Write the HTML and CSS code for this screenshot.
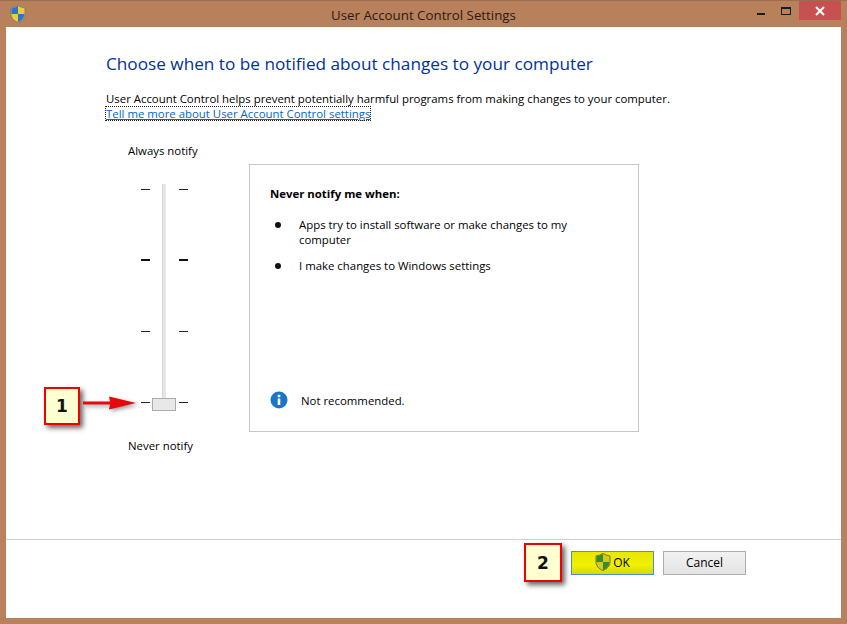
FILE: index.html
```html
<!DOCTYPE html>
<html lang="en">
<head>
  <meta charset="UTF-8">
  <title>User Account Control Settings</title>
  <link rel="stylesheet" href="styles.css">
</head>
<body>
  <div class="window">
    <div class="titlebar">
      <svg class="app-icon" width="16" height="18" viewBox="0 0 16 18">
        <path d="M8 0.5 C10 1.8 12.5 2.6 15 3 V9 C15 13 12 16 8 17.5 C4 16 1 13 1 9 V3 C3.5 2.6 6 1.8 8 0.5 Z" fill="#eccb3c" stroke="#6b7a80" stroke-width="0.8"/>
        <path d="M8 1 C6 2.2 3.8 3 1.5 3.4 V9 H8 Z" fill="#2f74c4"/>
        <path d="M8 9 H14.5 C14.3 12.8 11.6 15.6 8 17 Z" fill="#2f74c4"/>
      </svg>
      <div class="title">User Account Control Settings</div>
      <div class="controls">
        <div class="min-btn"></div>
        <div class="max-btn"></div>
        <div class="close-btn">
          <svg width="10" height="10" viewBox="0 0 10 10"><path d="M1 1 L9 9 M9 1 L1 9" stroke="#fff" stroke-width="2"/></svg>
        </div>
      </div>
    </div>

    <div class="client">
      <div class="content">
        <h1>Choose when to be notified about changes to your computer</h1>
        <p class="intro">User Account Control helps prevent potentially harmful programs from making changes to your computer.</p>
        <a class="more-link">Tell me more about User Account Control settings</a>

        <div class="settings">
          <div class="slider-col">
            <div class="slider-label">Always notify</div>
            <div class="slider">
              <div class="track"></div>
              <div class="tick-row"><span class="tick"></span><span class="tick"></span></div>
              <div class="tick-row bold"><span class="tick"></span><span class="tick"></span></div>
              <div class="tick-row"><span class="tick"></span><span class="tick"></span></div>
              <div class="tick-row"><span class="tick"></span><span class="tick"></span></div>
              <div class="thumb"></div>
            </div>
            <div class="slider-label">Never notify</div>
          </div>

          <div class="info-box">
            <div class="info-head">Never notify me when:</div>
            <ul class="info-list">
              <li>Apps try to install software or make changes to my computer</li>
              <li>I make changes to Windows settings</li>
            </ul>
            <div class="info-note">
              <svg width="18" height="18" viewBox="0 0 18 18">
                <circle cx="9" cy="9" r="8.5" fill="#1b74c5"/>
                <rect x="7.7" y="7.5" width="2.6" height="6.5" fill="#fff"/>
                <rect x="7.7" y="3.8" width="2.6" height="2.4" fill="#fff"/>
              </svg>
              <span>Not recommended.</span>
            </div>
          </div>
        </div>
      </div>

      <div class="footer">
        <button class="btn btn-ok">
          <svg width="16" height="18" viewBox="0 0 16 18">
            <path d="M8 0.5 C10 1.8 12.5 2.6 15 3 V9 C15 13 12 16 8 17.5 C4 16 1 13 1 9 V3 C3.5 2.6 6 1.8 8 0.5 Z" fill="#d8c81c" stroke="#6f6c1c" stroke-width="0.9"/>
            <path d="M8 1 C6 2.2 3.8 3 1.5 3.4 V9 H8 Z" fill="#2f8f34"/>
            <path d="M8 9 H14.5 C14.3 12.8 11.6 15.6 8 17 Z" fill="#2f8f34"/>
          </svg>
          OK
        </button>
        <button class="btn">Cancel</button>
      </div>
    </div>
  </div>

  <!-- callouts drawn on top of the screenshot -->
  <div class="callout callout-1">1</div>
  <svg class="arrow" width="56" height="14" viewBox="0 0 56 14">
    <path d="M1 5.6 H28 L27 0.5 L54 7 L27 13.5 L28 8.4 H1 Z" fill="#e8080c"/>
  </svg>
  <div class="callout callout-2">2</div>
</body>
</html>
```

FILE: styles.css
```css
* {
  box-sizing: border-box;
}

body {
  margin: 0;
  width: 847px;
  height: 624px;
  position: relative;
  overflow: hidden;
  font-family: "Open Sans", "Noto Sans", sans-serif;
  font-size: 11.4px;
  color: #000;
}

.window {
  width: 847px;
  height: 624px;
  background-color: #b9805c;
  padding: 0 6px 6px 6px;
  display: flex;
  flex-direction: column;
  border-top: 1px solid #9c6e50;
}

.titlebar {
  height: 26px;
  flex: none;
  display: flex;
  align-items: flex-start;
  position: relative;
}

.app-icon {
  margin: 4px 0 0 4px;
}

.title {
  position: absolute;
  left: 0;
  right: 0;
  top: 5px;
  text-align: center;
  font-size: 13.3px;
  color: #2a1c12;
}

.controls {
  margin-left: auto;
  display: flex;
  align-items: flex-start;
}

.min-btn {
  width: 8px;
  height: 2px;
  background-color: #1c1c1c;
  margin: 12px 16px 0 0;
}

.max-btn {
  width: 10px;
  height: 8px;
  border: 1px solid #1c1c1c;
  border-top-width: 2px;
  margin: 6px 8px 0 0;
}

.close-btn {
  width: 42px;
  height: 19px;
  background-color: #c75050;
  display: flex;
  align-items: center;
  justify-content: center;
}

.client {
  flex: 1;
  background-color: #fff;
  display: flex;
  flex-direction: column;
}

.content {
  flex: 1;
  padding: 25px 0 0 100px;
}

h1 {
  margin: 0;
  font-size: 17.2px;
  font-weight: 400;
  line-height: 24px;
  color: #003399;
}

.intro {
  margin: 15px 0 0 0;
  line-height: 15px;
  white-space: nowrap;
}

.more-link {
  display: inline-block;
  line-height: 13px;
  color: #0066cc;
  text-decoration: underline;
  outline: 1px dotted #222;
}

.settings {
  display: flex;
  margin-left: -39px;
  margin-top: 22px;
}

.slider-col {
  width: 182px;
  flex: none;
}

.slider-label {
  padding-left: 61px;
  line-height: 16px;
}

.slider {
  position: relative;
  width: 70px;
  height: 279px;
  margin: 0 0 0 77px;
  padding-top: 16px;
  display: flex;
  flex-direction: column;
}

.track {
  position: absolute;
  left: 18px;
  top: 25px;
  width: 4px;
  height: 226px;
  background-color: #e6e6e6;
  border-left: 1px solid #d6d6d6;
}

.tick-row {
  height: 71px;
  flex: none;
  display: flex;
  justify-content: space-between;
  padding: 14px 0 0 0;
  width: 47px;
  position: relative;
  left: -3px;
}

.tick {
  width: 9px;
  height: 1px;
  background-color: #222;
}

.tick-row.bold {
  padding-top: 13px;
}

.bold .tick {
  height: 2px;
  background-color: #111;
}

.thumb {
  position: absolute;
  left: 8px;
  top: 239px;
  width: 24px;
  height: 13px;
  background-color: #e8e8e8;
  border: 1px solid #ababab;
}

.info-box {
  width: 390px;
  height: 268px;
  margin-top: 21px;
  border: 1px solid #c8c8c8;
  padding: 21px 20px 0 20px;
  display: flex;
  flex-direction: column;
}

.info-head {
  font-weight: 700;
  line-height: 16px;
}

.info-list {
  margin: 15px 0 0 0;
  padding: 0;
  list-style: none;
}

.info-list li {
  position: relative;
  padding-left: 29px;
  line-height: 15px;
  margin-bottom: 11px;
  width: 310px;
}

.info-list li::before {
  content: "";
  position: absolute;
  left: 5px;
  top: 5px;
  width: 6px;
  height: 6px;
  border-radius: 50%;
  background-color: #111;
}

.info-note {
  margin-top: auto;
  margin-bottom: 22px;
  display: flex;
  align-items: center;
  gap: 13px;
}

.footer {
  height: 79px;
  flex: none;
  border-top: 1px solid #cfcfcf;
  display: flex;
  align-items: flex-start;
  gap: 9px;
  padding: 11px 0 0 565px;
}

.btn {
  width: 83px;
  height: 24px;
  font-family: inherit;
  font-size: 12px;
  color: #000;
  background: linear-gradient(#f2f2f2, #e4e4e4);
  border: 1px solid #acacac;
  padding: 0 0 2px 0;
  display: flex;
  align-items: center;
  justify-content: center;
  gap: 2px;
}

.btn-ok {
  background: linear-gradient(#e8e800, #f0f000 60%, #d8d800);
  border: 1px solid #4a8fd8;
}

.callout {
  position: absolute;
  width: 36px;
  height: 38px;
  background-color: #ffffd2;
  border: 2px solid #f00000;
  box-shadow: 3px 3px 5px #666;
  display: flex;
  align-items: center;
  justify-content: center;
  font-family: "DejaVu Sans", sans-serif;
  font-size: 17px;
  font-weight: 700;
  color: #111;
}

.callout-1 {
  left: 44px;
  top: 387px;
}

.callout-2 {
  left: 524px;
  top: 543px;
  width: 38px;
  height: 39px;
}

.arrow {
  position: absolute;
  left: 82px;
  top: 396px;
  filter: drop-shadow(2px 2px 2px #999);
}
```
